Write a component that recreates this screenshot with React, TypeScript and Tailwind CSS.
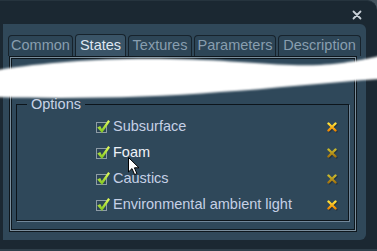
const tabs = [
  { label: 'Common', width: 'w-[65px]', active: false },
  { label: 'States', width: 'w-[51px]', active: true },
  { label: 'Textures', width: 'w-[64px]', active: false },
  { label: 'Parameters', width: 'w-[82px]', active: false },
  { label: 'Description', width: 'w-[83px]', active: false },
]

const options = [
  { label: 'Subsurface', hot: true, hover: false },
  { label: 'Foam', hot: false, hover: true },
  { label: 'Caustics', hot: false, hover: false },
  { label: 'Environmental ambient light', hot: true, hover: false },
]

function Check() {
  return (
    <span className="relative block h-[11px] w-[11px] border border-[#8e9ca6] bg-[#2c4456]">
      <svg className="absolute -left-[1px] -top-[4px]" width="15" height="15" viewBox="0 0 15 15">
        <defs>
          <linearGradient id="chk" x1="0" y1="0" x2="0" y2="1">
            <stop offset="0" stopColor="#e8ff5e" />
            <stop offset="1" stopColor="#78c01a" />
          </linearGradient>
        </defs>
        <path d="M1.2 8.6 L4.2 7 L5.8 10 L12.2 1 L14 2.4 L6 14 Z" fill="url(#chk)" />
      </svg>
    </span>
  )
}

function Remove({ hot }: { hot: boolean }) {
  const top = hot ? '#ffe23a' : '#c9b92c'
  const bottom = hot ? '#f08a00' : '#a5750e'
  const id = hot ? 'xhot' : 'xdim'
  return (
    <svg width="11" height="11" viewBox="0 0 11 11">
      <defs>
        <linearGradient id={id} x1="0" y1="0" x2="0" y2="1">
          <stop offset="0" stopColor={top} />
          <stop offset="1" stopColor={bottom} />
        </linearGradient>
      </defs>
      <path d="M2.5 2.5 L9.5 9.5 M9.5 2.5 L2.5 9.5" stroke="#1a2530" strokeOpacity="0.6" strokeWidth="2.4" strokeLinecap="round" />
      <path d="M1.5 1.5 L8.5 8.5 M8.5 1.5 L1.5 8.5" stroke={`url(#${id})`} strokeWidth="2.4" strokeLinecap="round" />
    </svg>
  )
}

export default function App() {
  return (
    <div className="relative h-[251px] w-[377px] overflow-hidden bg-[#44535d] font-['Liberation_Sans',Arial,sans-serif] text-[14.5px]">
      <div className="flex h-full flex-col rounded-tr-[10px] border-t border-[#26343e] bg-[#1b2832]">
        <div className="relative h-[23px]">
          <svg className="absolute left-[352px] top-[9px]" width="10" height="10" viewBox="0 0 10 10">
            <path d="M1.5 1.5 L8.5 8.5 M8.5 1.5 L1.5 8.5" stroke="#c9d1d8" strokeWidth="1.8" strokeLinecap="round" />
          </svg>
        </div>

        <div className="ml-[3px] h-[216px] w-[363px] rounded-r-[6px] bg-[#304859] pt-[11px]">
          <div className="flex h-[21px] items-end gap-[2px] pl-[5px]">
            {tabs.map((t) => (
              <div
                key={t.label}
                className={`${t.width} flex items-center justify-center rounded-t-[4px] border border-b-0 border-[#17232c] ${
                  t.active ? 'h-[22px] bg-[#3a5467] text-[#dfe7f2]' : 'h-[21px] bg-[#2d4556] text-[#889eaf]'
                }`}
              >
                {t.label}
              </div>
            ))}
          </div>

          <div className="ml-[6px] h-[176px] w-[348px] border border-[#0e171d]">
            <div className="h-full border border-[#7b8f9d]">
              <div className="h-full border border-[#0e171d] bg-[#2f485a]">
                <fieldset className="ml-[4px] mt-[37px] h-[125px] w-[333px] border border-[#0d151b] pt-[1px] shadow-[1px_1px_0_#71879a]">
                  <legend className="ml-[10px] px-[4px] leading-[17px] text-[#c8d3e6]">Options</legend>
                  {options.map((o) => (
                    <div key={o.label} className="flex h-[26px] items-center pl-[79px] pr-[10px]">
                      <Check />
                      <span className={`ml-[6px] flex-1 ${o.hover ? 'text-[#eef2f8]' : 'text-[#c6d0e6]'}`}>{o.label}</span>
                      <Remove hot={o.hot} />
                    </div>
                  ))}
                </fieldset>
              </div>
            </div>
          </div>
        </div>

        <div className="flex-1 border-b-2 border-[#2f3f4a]" />
      </div>

      <svg className="pointer-events-none absolute left-0 top-0" width="377" height="251" viewBox="0 0 377 251">
        <defs>
          <filter id="soft" x="-5%" y="-20%" width="110%" height="140%">
            <feGaussianBlur stdDeviation="0.9" />
          </filter>
        </defs>
        <path
          d="M-2 70 C 50 62 100 58 170 59 C 240 60 280 67 320 65 C 350 63 365 59 380 56 L380 79 C 330 82 270 89 220 92 C 150 98 60 99 -2 97 Z"
          fill="#ffffff"
          filter="url(#soft)"
        />
      </svg>

      <svg className="pointer-events-none absolute left-[128px] top-[157px]" width="13" height="19" viewBox="0 0 13 19">
        <path d="M0.5 0.5 L0.5 15 L4 11.6 L6.6 17.6 L8.9 16.6 L6.4 10.8 L11 10.8 Z" fill="#ffffff" stroke="#000000" strokeWidth="1" strokeLinejoin="miter" />
      </svg>
    </div>
  )
}
